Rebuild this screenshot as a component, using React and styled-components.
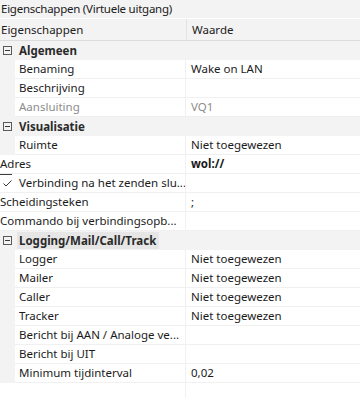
import React from "react";
import styled, { createGlobalStyle } from "styled-components";

const Global = createGlobalStyle`
  html, body { margin: 0; padding: 0; background: #ffffff; }
  body { font-family: "Noto Sans", "Open Sans", sans-serif; font-size: 11.5px; color: #1b1b1b; }
  * { box-sizing: border-box; }
`;

const Panel = styled.div`
  width: 360px;
  display: flex;
  flex-direction: column;
  background: #ffffff;
`;

const Title = styled.div`
  height: 19px;
  line-height: 18px;
  padding-left: 1px;
  background: #f3f3f3;
  border-bottom: 1px solid #ffffff;
  color: #202020;
  white-space: nowrap;
  letter-spacing: -0.25px;
`;

const Header = styled.div`
  display: grid;
  grid-template-columns: 186px 1fr;
  height: 22px;
  background: #f3f3f3;
  border-bottom: 1px solid #dcdcdc;
`;

const HeaderCell = styled.div`
  line-height: 21px;
  padding-left: ${(p) => (p.$value ? "5px" : "1px")};
  border-left: ${(p) => (p.$value ? "1px solid #e3e3e3" : "none")};
  color: #202020;
`;

const GroupRow = styled.div`
  display: flex;
  align-items: center;
  height: 19px;
  background: #f3f3f3;
`;

const Toggle = styled.span`
  width: 9px;
  height: 9px;
  margin: 0 5px 0 3px;
  border: 1px solid #5a5a5a;
  position: relative;
  flex: none;
  &::after {
    content: "";
    position: absolute;
    left: 1px;
    right: 1px;
    top: 3px;
    height: 1px;
    background: #3a3a3a;
  }
`;

const GroupLabel = styled.span`
  font-weight: 700;
  color: #2a2a2a;
  padding: 0 3px 0 2px;
  line-height: 17px;
  height: 17px;
  background: ${(p) => (p.$selected ? "#e6e6e6" : "transparent")};
`;

const Row = styled.div`
  display: flex;
  height: 19px;
`;

const Gutter = styled.div`
  width: ${(p) => p.$w}px;
  flex: none;
  background: ${(p) => (p.$grey ? "#f3f3f3" : "#ffffff")};
  border-bottom: ${(p) => (p.$grey ? "none" : "1px solid #f0f0f0")};
  position: relative;
  display: flex;
  align-items: center;
  justify-content: center;
`;

const Cells = styled.div`
  flex: 1;
  display: grid;
  grid-template-columns: ${(p) => 185 - p.$indent}px 1fr;
  border-bottom: 1px solid #f0f0f0;
`;

const Label = styled.div`
  line-height: 18px;
  padding-left: ${(p) => p.$pad}px;
  white-space: nowrap;
  overflow: hidden;
  color: ${(p) => (p.$dim ? "#8c8c8c" : "#1b1b1b")};
`;

const Value = styled.div`
  line-height: 18px;
  padding-left: 5px;
  border-left: 1px solid #f0f0f0;
  white-space: nowrap;
  overflow: hidden;
  font-weight: ${(p) => (p.$bold ? 700 : 400)};
  color: ${(p) => (p.$dim ? "#8c8c8c" : "#1b1b1b")};
`;

const CheckTop = styled.span`
  position: absolute;
  left: 0;
  top: 0;
  width: 12px;
  height: 1px;
  background: #3c3c3c;
`;

const Filler = styled.div`
  display: grid;
  grid-template-columns: 185px 1fr;
  height: 15px;
  & > div:last-child { border-left: 1px solid #f0f0f0; }
`;

const Check = () => (
  <svg width="9" height="7" viewBox="0 0 9 7">
    <path d="M0.5 3.5 L3 6 L8.5 0.5" fill="none" stroke="#333" strokeWidth="1" />
  </svg>
);

const Prop = ({ label, value, dim, bold, indent = 15, grey = true, check, labelPad = 4 }) => (
  <Row>
    {indent > 0 && (
      <Gutter $w={indent} $grey={grey}>
        {check && (
          <>
            <CheckTop />
            <Check />
          </>
        )}
      </Gutter>
    )}
    <Cells $indent={indent}>
      <Label $dim={dim} $pad={indent > 0 ? labelPad : 0}>{label}</Label>
      <Value $dim={dim} $bold={bold}>{value}</Value>
    </Cells>
  </Row>
);

const Group = ({ label, selected }) => (
  <GroupRow>
    <Toggle />
    <GroupLabel $selected={selected}>{label}</GroupLabel>
  </GroupRow>
);

export default function App() {
  return (
    <>
      <Global />
      <Panel>
        <Title>Eigenschappen (Virtuele uitgang)</Title>
        <Header>
          <HeaderCell>Eigenschappen</HeaderCell>
          <HeaderCell $value>Waarde</HeaderCell>
        </Header>
        <Group label="Algemeen" />
        <Prop label="Benaming" value="Wake on LAN" />
        <Prop label="Beschrijving" value="" />
        <Prop label="Aansluiting" value="VQ1" dim />
        <Group label="Visualisatie" />
        <Prop label="Ruimte" value="Niet toegewezen" />
        <Prop label="Adres" value="wol://" bold indent={0} />
        <Prop label="Verbinding na het zenden slu..." value="" grey={false} check />
        <Prop label="Scheidingsteken" value=";" indent={0} />
        <Prop label="Commando bij verbindingsopb..." value="" indent={0} />
        <Group label="Logging/Mail/Call/Track" selected />
        <Prop label="Logger" value="Niet toegewezen" />
        <Prop label="Mailer" value="Niet toegewezen" />
        <Prop label="Caller" value="Niet toegewezen" />
        <Prop label="Tracker" value="Niet toegewezen" />
        <Prop label="Bericht bij AAN / Analoge ve..." value="" />
        <Prop label="Bericht bij UIT" value="" />
        <Prop label="Minimum tijdinterval" value="0,02" />
        <Filler>
          <div />
          <div />
        </Filler>
      </Panel>
    </>
  );
}
